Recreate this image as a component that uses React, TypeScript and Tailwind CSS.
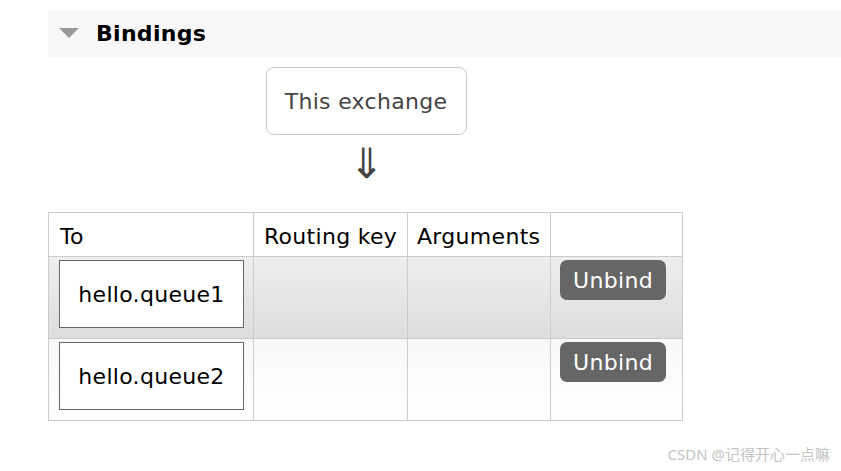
import React from "react";

const ROWS = [
  { queue: "hello.queue1", bg: "bg-gradient-to-b from-[#eeeeee] to-[#dddddd]" },
  { queue: "hello.queue2", bg: "bg-gradient-to-b from-[#f8f8f8] to-[#ffffff]" },
];

export default function App() {
  return (
    <div
      className="relative w-[841px] h-[471px] bg-white text-black overflow-hidden"
      style={{ fontFamily: '"DejaVu Sans", Verdana, sans-serif' }}
    >
      <div className="pt-[10px] pl-[48px]">
        <div className="flex items-center h-[47px] bg-[#f7f7f7]">
          <svg width="20" height="11" viewBox="0 0 20 11" className="ml-[11px]">
            <polygon points="0,0 20,0 10,10" fill="#999999" />
          </svg>
          <span className="ml-[17px] text-[22px] font-bold leading-none tracking-[0.3px]">Bindings</span>
        </div>

        <div className="flex flex-col items-center w-[636px]">
          <div className="mt-[10px] w-[201px] h-[68px] flex items-center justify-center rounded-[8px] border border-[#c8c8c8] text-[22px] text-[#444444] tracking-[0.3px]">
            This exchange
          </div>
          <div className="mt-[8px] h-[40px] text-[42px] leading-none text-[#444444] font-light">⇓</div>
        </div>

        <table className="mt-[29px] border-collapse table-fixed w-[634px] text-[22px] tracking-[0.3px] whitespace-nowrap">
          <thead>
            <tr className="h-[44px]">
              <th className="w-[205px] border border-[#cccccc] pl-[11px] pr-0 pt-[3px] text-left font-normal">To</th>
              <th className="w-[154px] border border-[#cccccc] pl-[10px] pr-0 pt-[3px] text-left font-normal">Routing key</th>
              <th className="w-[143px] border border-[#cccccc] pl-[9px] pr-0 pt-[3px] text-left font-normal">Arguments</th>
              <th className="w-[132px] border border-[#cccccc]"></th>
            </tr>
          </thead>
          <tbody>
            {ROWS.map((row) => (
              <tr key={row.queue} className={`h-[82px] ${row.bg}`}>
                <td className="border border-[#cccccc] px-[10px] py-[3px] align-top">
                  <div className="w-[185px] h-[68px] flex items-center justify-center border border-[#666666] bg-white pt-[1px]">
                    {row.queue}
                  </div>
                </td>
                <td className="border border-[#cccccc]"></td>
                <td className="border border-[#cccccc]"></td>
                <td className="border border-[#cccccc] px-[9px] pt-[3px] align-top">
                  <div className="w-[106px] h-[40px] flex items-center justify-center rounded-[7px] bg-[#666666] text-white">
                    Unbind
                  </div>
                </td>
              </tr>
            ))}
          </tbody>
        </table>
      </div>

      <div
        className="absolute right-[11px] bottom-[6px] text-[15px] text-[#c4c4c4]"
        style={{ fontFamily: '"Noto Sans", "Noto Sans CJK SC", sans-serif' }}
      >
        CSDN @记得开心一点嘛
      </div>
    </div>
  );
}
